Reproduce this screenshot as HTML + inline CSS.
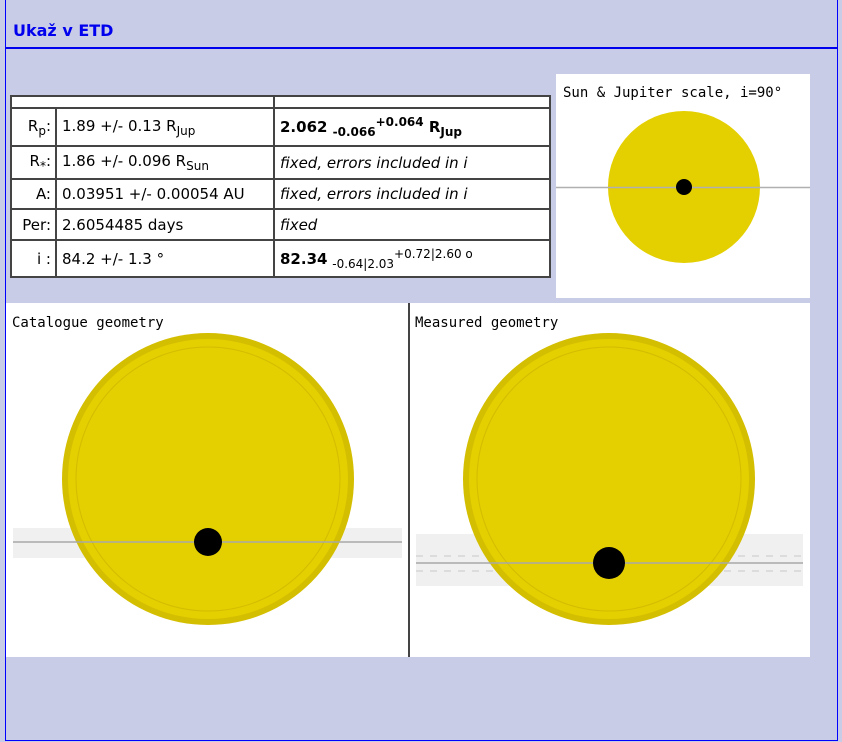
<!DOCTYPE html>
<html><head><meta charset="utf-8"><style>
*{margin:0;padding:0;box-sizing:border-box}
body{width:842px;height:742px;background:#c8cce6;position:relative;overflow:hidden;font-family:Verdana,"DejaVu Sans",sans-serif}
#frame{position:absolute;left:5px;top:-2px;width:833px;height:743px;border:1px solid #0000ff;border-top:none}
#hline{position:absolute;left:5px;top:47px;width:833px;height:2px;background:#0000ee}
#title{position:absolute;left:13px;top:21px;font:bold 16px "DejaVu Sans",Verdana,sans-serif;color:#0000ee}
table{position:absolute;left:10px;top:95px;width:541px;border-collapse:collapse;font-size:15px;color:#000;background:#fff;font-family:"DejaVu Sans",sans-serif}
td{border:2px solid #444;padding:0 5px;white-space:nowrap}
td.l{text-align:right;width:45px;padding-right:4px}
td.c2{width:218px}
sub,sup{font-size:12px}
.b{font-weight:bold}
.i{font-style:italic}
svg{position:absolute;left:0;top:0}
.mono{font-family:"DejaVu Sans Mono","Liberation Mono",monospace;font-size:14px}
</style></head><body>
<div id="frame"></div><div id="hline"></div>
<div id="title">Ukaž v ETD</div>
<svg width="842" height="742">
<rect x="556" y="74" width="254" height="224" fill="#fff"/>
<text x="563" y="97" class="mono" fill="#000">Sun &amp; Jupiter scale, i=90°</text>
<circle cx="684" cy="187" r="76" fill="#e4cf00"/>
<line x1="556" y1="187.5" x2="810" y2="187.5" stroke="#b0b0b0" stroke-width="1.5"/>
<circle cx="684" cy="187" r="8" fill="#000"/>

<rect x="6" y="303" width="402" height="354" fill="#fff"/>
<rect x="410" y="303" width="400" height="354" fill="#fff"/>
<rect x="408" y="303" width="2" height="354" fill="#444"/>
<text x="12" y="327" class="mono" fill="#000">Catalogue geometry</text>
<text x="415" y="327" class="mono" fill="#000">Measured geometry</text>

<rect x="13" y="528" width="389" height="30" fill="#f0f0f0"/>
<circle cx="208" cy="479" r="146" fill="#d4be00"/>
<circle cx="208" cy="479" r="140" fill="#e4cf00"/>
<circle cx="208" cy="479" r="132" fill="none" stroke="#d2bd00" stroke-width="1"/>
<line x1="13" y1="542" x2="402" y2="542" stroke="#a8a8a8" stroke-width="1.5"/>
<circle cx="208" cy="542" r="14" fill="#000"/>

<rect x="416" y="534" width="387" height="52" fill="#f0f0f0"/>
<line x1="416" y1="556" x2="803" y2="556" stroke="#c8c8c8" stroke-width="1" stroke-dasharray="7,7"/>
<line x1="416" y1="571" x2="803" y2="571" stroke="#c8c8c8" stroke-width="1" stroke-dasharray="7,7"/>
<circle cx="609" cy="479" r="146" fill="#d4be00"/>
<circle cx="609" cy="479" r="140" fill="#e4cf00"/>
<circle cx="609" cy="479" r="132" fill="none" stroke="#d2bd00" stroke-width="1"/>
<line x1="416" y1="563" x2="803" y2="563" stroke="#a8a8a8" stroke-width="1.5"/>
<circle cx="609" cy="563" r="16" fill="#000"/>
</svg>
<table>
<tr style="height:12px"><td colspan="2"></td><td></td></tr>
<tr style="height:38px"><td class="l">R<sub>p</sub>:</td><td class="c2">1.89 +/- 0.13 R<sub>Jup</sub></td><td class="b">2.062 <sub>-0.066</sub><sup>+0.064</sup> R<sub>Jup</sub></td></tr>
<tr style="height:33px"><td class="l">R<sub>*</sub>:</td><td>1.86 +/- 0.096 R<sub>Sun</sub></td><td class="i">fixed, errors included in i</td></tr>
<tr style="height:30px"><td class="l">A:</td><td>0.03951 +/- 0.00054 AU</td><td class="i">fixed, errors included in i</td></tr>
<tr style="height:31px"><td class="l">Per:</td><td>2.6054485 days</td><td class="i">fixed</td></tr>
<tr style="height:37px"><td class="l">i :</td><td>84.2 +/- 1.3 °</td><td><b>82.34</b> <sub>-0.64|2.03</sub><sup>+0.72|2.60 o</sup></td></tr>
</table>
</body></html>
